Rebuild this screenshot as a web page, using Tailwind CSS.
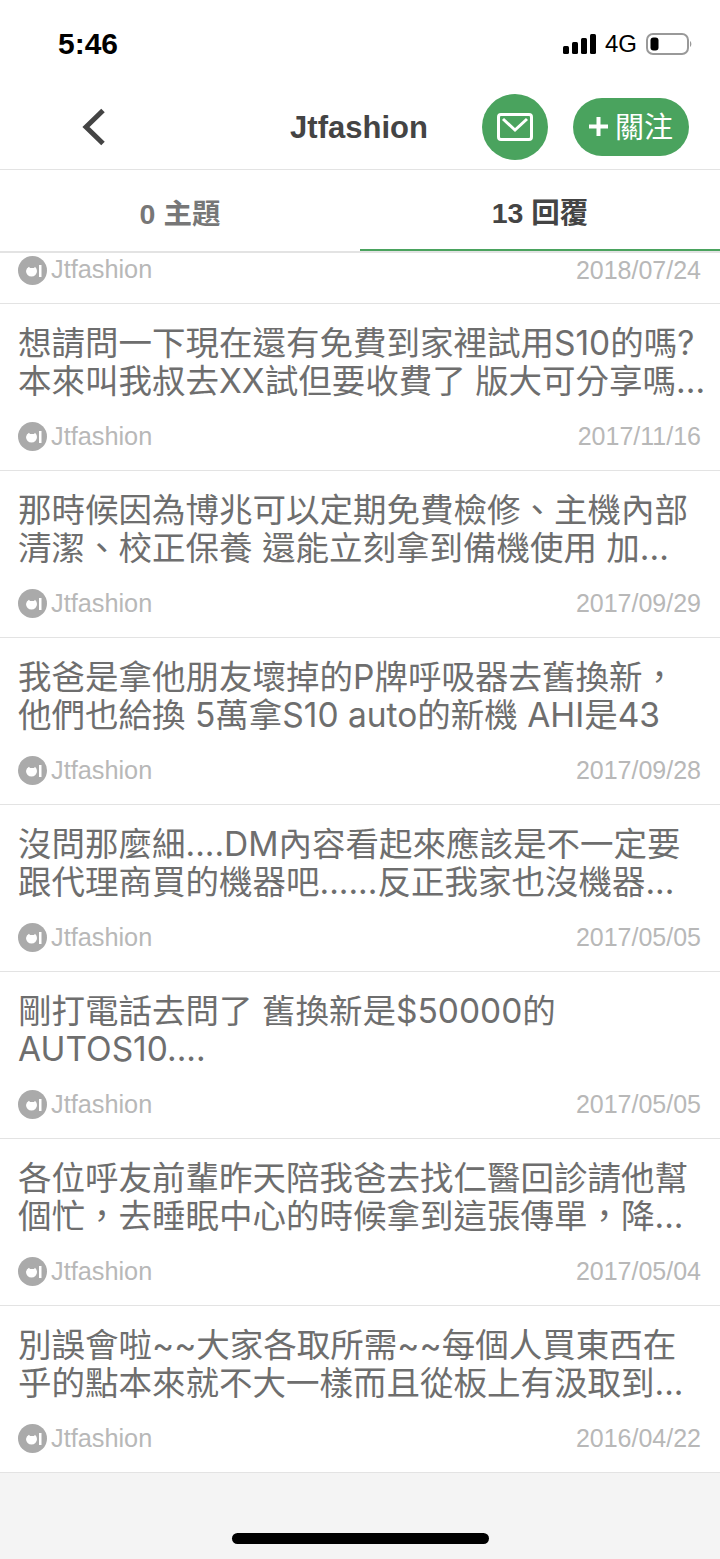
<!DOCTYPE html>
<html lang="zh-Hant">
<head>
    <meta charset="UTF-8">
    <meta name="viewport" content="width=device-width, initial-scale=1.0">
    <title>Jtfashion</title>
    <script src="https://cdn.jsdelivr.net/npm/@tailwindcss/browser@4"></script>
</head>
<body class="w-[720px] h-[1559px] overflow-hidden bg-[#f4f4f4] font-['Liberation_Sans','Noto_Sans_CJK_TC',sans-serif]">
    <!-- status bar -->
    <div class="h-[88px] bg-white flex items-center justify-between pl-[58px] pr-[28px]">
        <span class="text-[30px] leading-none font-bold text-black">5:46</span>
        <div class="flex items-center gap-[8px]">
            <svg width="34" height="20" viewBox="0 0 34 20" class="-mt-[1px]"><rect x="0" y="12" width="6" height="8" rx="1.500" fill="#000"/><rect x="9" y="8" width="6" height="12" rx="1.500" fill="#000"/><rect x="18" y="4" width="6" height="16" rx="1.500" fill="#000"/><rect x="27" y="0" width="6" height="20" rx="1.500" fill="#000"/></svg>
            <span class="text-[24px] leading-none text-black">4G</span>
            <svg width="46" height="22" viewBox="0 0 46 22" class="ml-[1px]"><rect x="1" y="1" width="41" height="20" rx="6" fill="none" stroke="#999" stroke-width="2"/><rect x="4.500" y="4.500" width="8" height="13" rx="3" fill="#000"/><path d="M44 8c1.800.7 1.800 5.300 0 6z" fill="#999"/></svg>
        </div>
    </div>
    <!-- nav -->
    <div class="h-[82px] bg-white border-b border-[#e3e3e3] flex items-center relative pb-[4px]">
        <svg width="26" height="38" viewBox="0 0 26 38" class="ml-[81px]"><path d="M22 2.500 5 19l17 16.500" fill="none" stroke="#444" stroke-width="5"/></svg>
        <div class="absolute left-0 top-[20px] w-[718px] text-center text-[31px] leading-[40px] font-bold text-[#444]">Jtfashion</div>
        <div class="ml-auto flex items-center gap-[25px] pr-[31px]">
            <div class="w-[66px] h-[66px] rounded-full bg-[#4aa35e] flex items-center justify-center">
                <svg width="36" height="28" viewBox="0 0 36 28"><rect x="1.500" y="1.500" width="33" height="25" rx="2.500" fill="none" stroke="#fff" stroke-width="3"/><path d="M6 6l12 11L30 6" fill="none" stroke="#fff" stroke-width="3"/></svg>
            </div>
            <div class="w-[116px] h-[58px] rounded-full bg-[#4aa35e] flex items-center justify-center gap-[7px] text-white">
                <svg width="19" height="19" viewBox="0 0 19 19"><path d="M9.500 0v19M0 9.500h19" stroke="#fff" stroke-width="4"/></svg>
                <span class="text-[29px] leading-none pt-[3px]">關注</span>
            </div>
        </div>
    </div>
    <!-- tabs -->
    <div class="h-[83px] bg-white flex border-b-2 border-[#e3e3e3]">
        <div class="w-1/2 flex items-center justify-center pt-[7px] text-[28.500px] font-bold text-[#777]">0 主題</div>
        <div class="w-1/2 flex items-center justify-center pt-[7px] text-[28.500px] font-bold text-[#444] border-b-2 border-[#4aa35e]">13 回覆</div>
    </div>
    <!-- list -->
    <div id="list" class="bg-white">
        <div class="h-[51px] px-[18px] pb-[16px] flex items-center justify-between border-b border-[#e3e3e3]">
            <div class="flex items-center gap-[4px]">
                <svg width="29" height="29" viewBox="0 0 29 29"><circle cx="14.500" cy="14.500" r="14.500" fill="#aaa"/><path d="M8 15a5.500 5.500 0 1 0 11 0 5.500 5.500 0 0 0-2-4.300l-1 1.300h-4l-1-1.300A5.500 5.500 0 0 0 8 15z" fill="#fff"/><rect x="21" y="9" width="2.500" height="12" fill="#fff"/></svg>
                <span class="text-[25.300px] leading-none text-[#b8b8b8]">Jtfashion</span>
            </div>
            <span class="text-[25px] leading-none text-[#b8b8b8] pr-[1px]">2018/07/24</span>
        </div>
        <div class="h-[167px] px-[18px] pt-[20px] border-b border-[#e3e3e3]">
            <p class="font-['Inter','Noto_Sans_CJK_TC',sans-serif] text-[33.500px] leading-[38px] text-[#6e6e6e] whitespace-nowrap h-[76px]">想請問一下現在還有免費到家裡試用S10的嗎?<br>本來叫我叔去XX試但要收費了 版大可分享嗎...</p>
            <div class="flex items-center justify-between mt-[22px]">
                <div class="flex items-center gap-[4px]">
                    <svg width="29" height="29" viewBox="0 0 29 29"><circle cx="14.500" cy="14.500" r="14.500" fill="#aaa"/><path d="M8 15a5.500 5.500 0 1 0 11 0 5.500 5.500 0 0 0-2-4.300l-1 1.300h-4l-1-1.300A5.500 5.500 0 0 0 8 15z" fill="#fff"/><rect x="21" y="9" width="2.500" height="12" fill="#fff"/></svg>
                    <span class="text-[25.300px] leading-none text-[#b8b8b8]">Jtfashion</span>
                </div>
                <span class="text-[25px] leading-none text-[#b8b8b8] pr-[1px]">2017/11/16</span>
            </div>
        </div>
        <div class="h-[167px] px-[18px] pt-[20px] border-b border-[#e3e3e3]">
            <p class="font-['Inter','Noto_Sans_CJK_TC',sans-serif] text-[33.500px] leading-[38px] text-[#6e6e6e] whitespace-nowrap h-[76px]">那時候因為博兆可以定期免費檢修、主機內部<br>清潔、校正保養 還能立刻拿到備機使用 加...</p>
            <div class="flex items-center justify-between mt-[22px]">
                <div class="flex items-center gap-[4px]">
                    <svg width="29" height="29" viewBox="0 0 29 29"><circle cx="14.500" cy="14.500" r="14.500" fill="#aaa"/><path d="M8 15a5.500 5.500 0 1 0 11 0 5.500 5.500 0 0 0-2-4.300l-1 1.300h-4l-1-1.300A5.500 5.500 0 0 0 8 15z" fill="#fff"/><rect x="21" y="9" width="2.500" height="12" fill="#fff"/></svg>
                    <span class="text-[25.300px] leading-none text-[#b8b8b8]">Jtfashion</span>
                </div>
                <span class="text-[25px] leading-none text-[#b8b8b8] pr-[1px]">2017/09/29</span>
            </div>
        </div>
        <div class="h-[167px] px-[18px] pt-[20px] border-b border-[#e3e3e3]">
            <p class="font-['Inter','Noto_Sans_CJK_TC',sans-serif] text-[33.500px] leading-[38px] text-[#6e6e6e] whitespace-nowrap h-[76px]">我爸是拿他朋友壞掉的P牌呼吸器去舊換新，<br>他們也給換 5萬拿S10 auto的新機 AHI是43</p>
            <div class="flex items-center justify-between mt-[22px]">
                <div class="flex items-center gap-[4px]">
                    <svg width="29" height="29" viewBox="0 0 29 29"><circle cx="14.500" cy="14.500" r="14.500" fill="#aaa"/><path d="M8 15a5.500 5.500 0 1 0 11 0 5.500 5.500 0 0 0-2-4.300l-1 1.300h-4l-1-1.300A5.500 5.500 0 0 0 8 15z" fill="#fff"/><rect x="21" y="9" width="2.500" height="12" fill="#fff"/></svg>
                    <span class="text-[25.300px] leading-none text-[#b8b8b8]">Jtfashion</span>
                </div>
                <span class="text-[25px] leading-none text-[#b8b8b8] pr-[1px]">2017/09/28</span>
            </div>
        </div>
        <div class="h-[167px] px-[18px] pt-[20px] border-b border-[#e3e3e3]">
            <p class="font-['Inter','Noto_Sans_CJK_TC',sans-serif] text-[33.500px] leading-[38px] text-[#6e6e6e] whitespace-nowrap h-[76px]">沒問那麼細....DM內容看起來應該是不一定要<br>跟代理商買的機器吧......反正我家也沒機器...</p>
            <div class="flex items-center justify-between mt-[22px]">
                <div class="flex items-center gap-[4px]">
                    <svg width="29" height="29" viewBox="0 0 29 29"><circle cx="14.500" cy="14.500" r="14.500" fill="#aaa"/><path d="M8 15a5.500 5.500 0 1 0 11 0 5.500 5.500 0 0 0-2-4.300l-1 1.300h-4l-1-1.300A5.500 5.500 0 0 0 8 15z" fill="#fff"/><rect x="21" y="9" width="2.500" height="12" fill="#fff"/></svg>
                    <span class="text-[25.300px] leading-none text-[#b8b8b8]">Jtfashion</span>
                </div>
                <span class="text-[25px] leading-none text-[#b8b8b8] pr-[1px]">2017/05/05</span>
            </div>
        </div>
        <div class="h-[167px] px-[18px] pt-[20px] border-b border-[#e3e3e3]">
            <p class="font-['Inter','Noto_Sans_CJK_TC',sans-serif] text-[33.500px] leading-[38px] text-[#6e6e6e] whitespace-nowrap h-[76px]">剛打電話去問了 舊換新是$50000的<br>AUTOS10....</p>
            <div class="flex items-center justify-between mt-[22px]">
                <div class="flex items-center gap-[4px]">
                    <svg width="29" height="29" viewBox="0 0 29 29"><circle cx="14.500" cy="14.500" r="14.500" fill="#aaa"/><path d="M8 15a5.500 5.500 0 1 0 11 0 5.500 5.500 0 0 0-2-4.300l-1 1.300h-4l-1-1.300A5.500 5.500 0 0 0 8 15z" fill="#fff"/><rect x="21" y="9" width="2.500" height="12" fill="#fff"/></svg>
                    <span class="text-[25.300px] leading-none text-[#b8b8b8]">Jtfashion</span>
                </div>
                <span class="text-[25px] leading-none text-[#b8b8b8] pr-[1px]">2017/05/05</span>
            </div>
        </div>
        <div class="h-[167px] px-[18px] pt-[20px] border-b border-[#e3e3e3]">
            <p class="font-['Inter','Noto_Sans_CJK_TC',sans-serif] text-[33.500px] leading-[38px] text-[#6e6e6e] whitespace-nowrap h-[76px]">各位呼友前輩昨天陪我爸去找仁醫回診請他幫<br>個忙，去睡眠中心的時候拿到這張傳單，降...</p>
            <div class="flex items-center justify-between mt-[22px]">
                <div class="flex items-center gap-[4px]">
                    <svg width="29" height="29" viewBox="0 0 29 29"><circle cx="14.500" cy="14.500" r="14.500" fill="#aaa"/><path d="M8 15a5.500 5.500 0 1 0 11 0 5.500 5.500 0 0 0-2-4.300l-1 1.300h-4l-1-1.300A5.500 5.500 0 0 0 8 15z" fill="#fff"/><rect x="21" y="9" width="2.500" height="12" fill="#fff"/></svg>
                    <span class="text-[25.300px] leading-none text-[#b8b8b8]">Jtfashion</span>
                </div>
                <span class="text-[25px] leading-none text-[#b8b8b8] pr-[1px]">2017/05/04</span>
            </div>
        </div>
        <div class="h-[167px] px-[18px] pt-[20px] border-b border-[#e3e3e3]">
            <p class="font-['Inter','Noto_Sans_CJK_TC',sans-serif] text-[33.500px] leading-[38px] text-[#6e6e6e] whitespace-nowrap h-[76px]">別誤會啦~~大家各取所需~~每個人買東西在<br>乎的點本來就不大一樣而且從板上有汲取到...</p>
            <div class="flex items-center justify-between mt-[22px]">
                <div class="flex items-center gap-[4px]">
                    <svg width="29" height="29" viewBox="0 0 29 29"><circle cx="14.500" cy="14.500" r="14.500" fill="#aaa"/><path d="M8 15a5.500 5.500 0 1 0 11 0 5.500 5.500 0 0 0-2-4.300l-1 1.300h-4l-1-1.300A5.500 5.500 0 0 0 8 15z" fill="#fff"/><rect x="21" y="9" width="2.500" height="12" fill="#fff"/></svg>
                    <span class="text-[25.300px] leading-none text-[#b8b8b8]">Jtfashion</span>
                </div>
                <span class="text-[25px] leading-none text-[#b8b8b8] pr-[1px]">2016/04/22</span>
            </div>
        </div>
    </div>
    <!-- home indicator -->
    <div class="flex justify-center pt-[60px]">
        <div class="w-[257px] h-[11px] rounded-full bg-black"></div>
    </div>
</body>
</html>
